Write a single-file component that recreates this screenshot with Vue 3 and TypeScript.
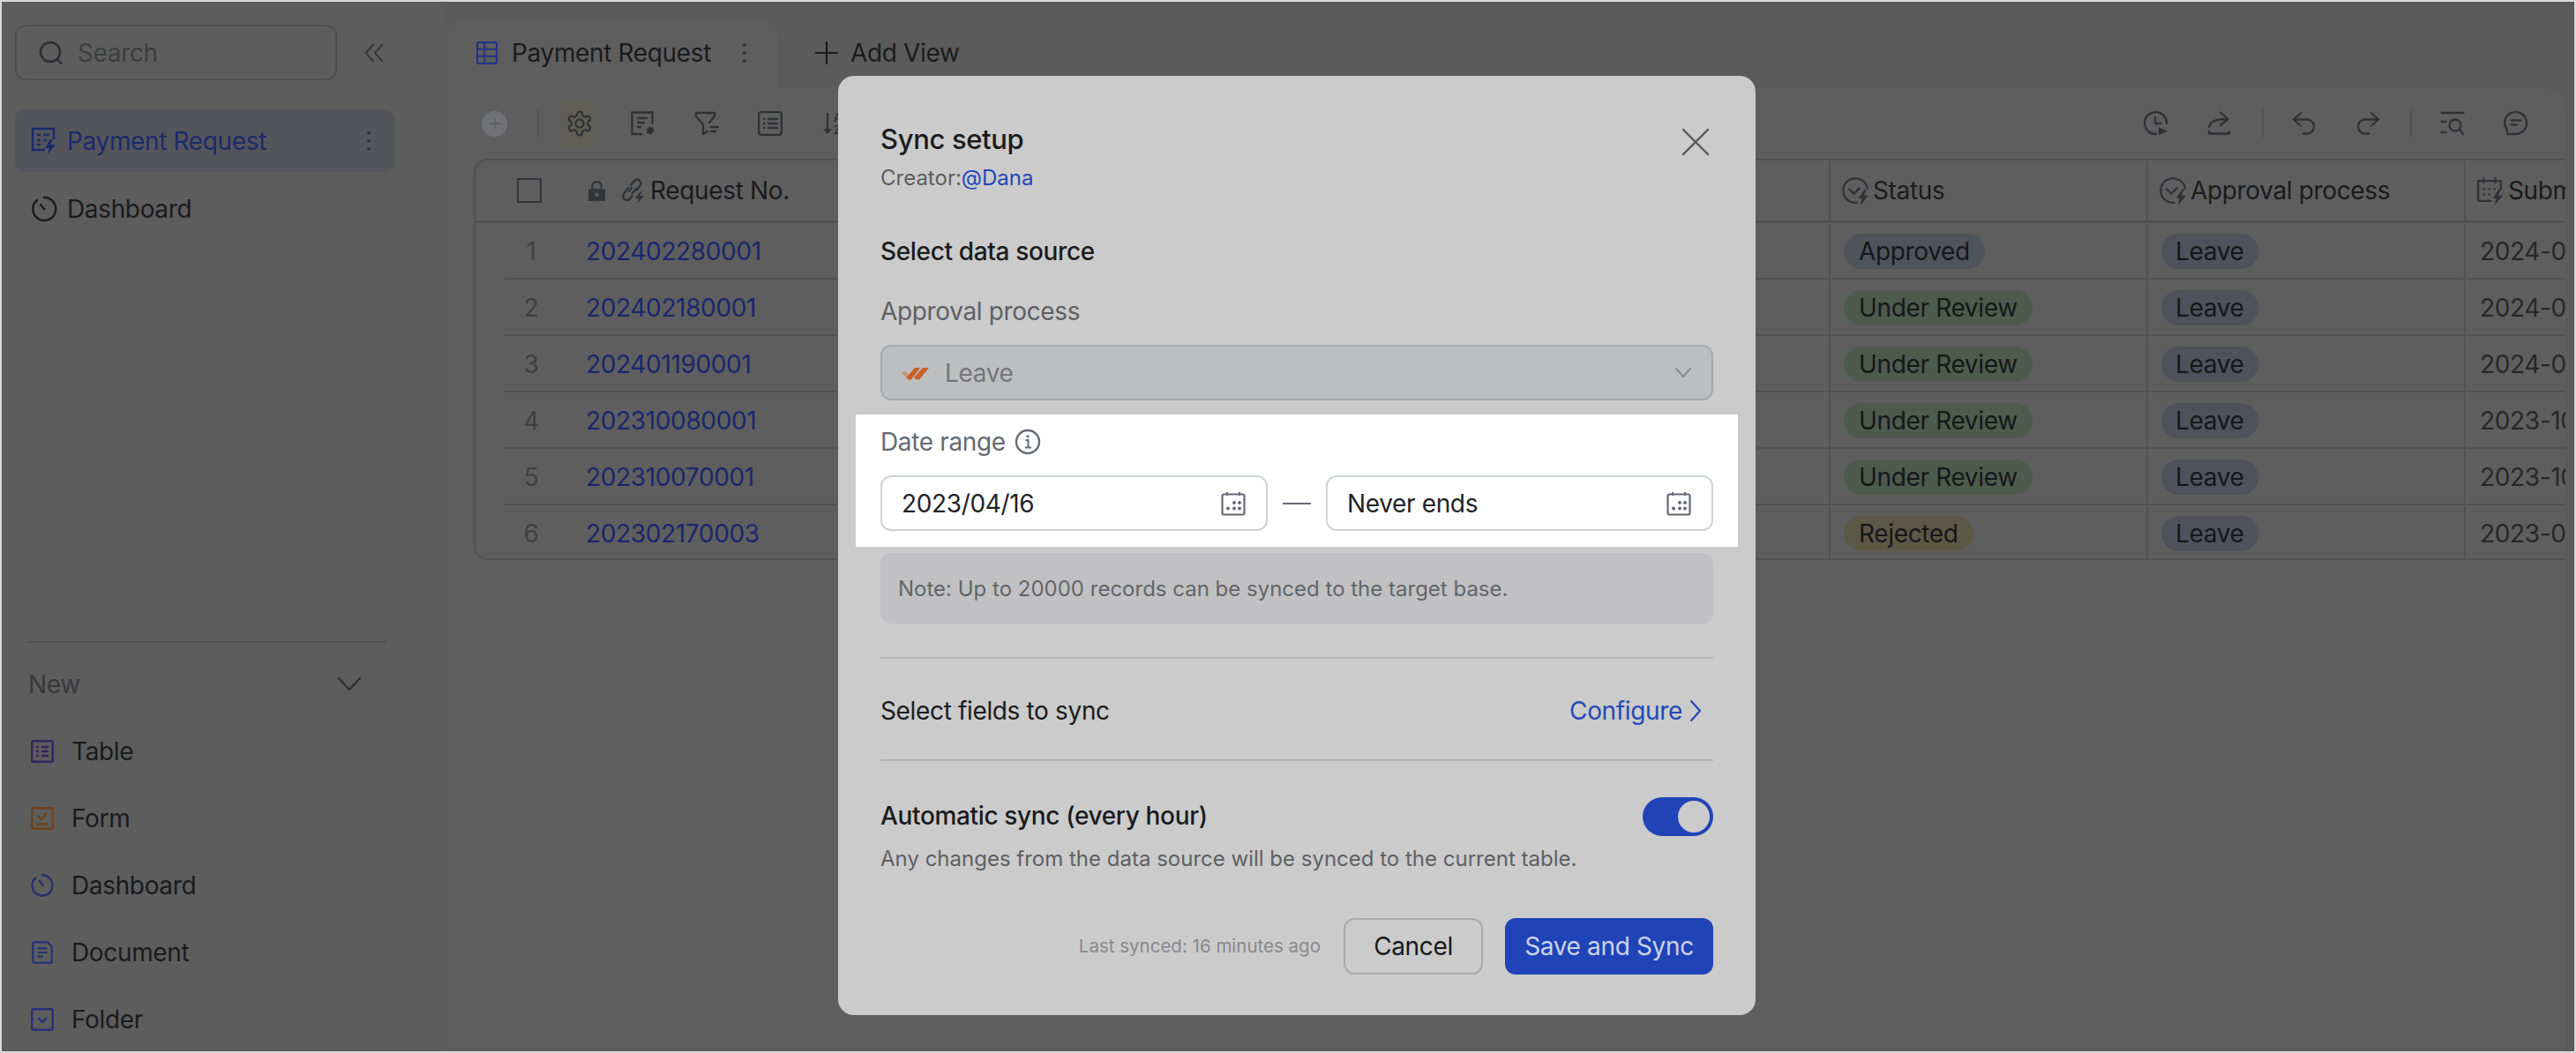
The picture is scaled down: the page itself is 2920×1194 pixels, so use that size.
<template>
  <div class="page">
    <aside class="sidebar">
      <div class="search-row">
        <div class="search">
          <svg class="ic28" viewBox="0 0 28 28" fill="none" stroke="currentColor" stroke-width="2.4" stroke-linecap="round">
            <circle cx="13" cy="13" r="11" />
            <path d="M21 21.5l4.5 4.5" />
          </svg>
          <span>Search</span>
        </div>
        <svg class="collapse" viewBox="0 0 28 28" fill="none" stroke="currentColor" stroke-width="2.2" stroke-linecap="round" stroke-linejoin="round">
          <path d="M13 4L4 14l9 10M24 4l-9 10 9 10" />
        </svg>
      </div>
      <div class="nav-item active">
        <svg class="ic30" viewBox="0 0 30 32" fill="none" stroke="currentColor" stroke-width="2.4">
          <path d="M16 26H2V2h24v12" />
          <path d="M7 9h4M14 9h7M7 15h4M14 15h4M7 20h4" />
          <path d="M22 14l-6 10h5l-2 7 9-11h-6l3-6z" fill="currentColor" stroke="none" />
        </svg>
        <span>Payment Request</span>
        <i class="kebab"></i>
      </div>
      <div class="nav-item">
        <svg class="ic30" viewBox="0 0 30 32" fill="none" stroke="currentColor" stroke-width="2.4" stroke-linecap="round">
          <path d="M15 3a13 13 0 1 1-8 3" />
          <path d="M11 11l4 5" />
        </svg>
        <span>Dashboard</span>
      </div>
      <div class="side-bottom">
        <div class="new-head">
          <span>New</span>
          <svg class="new-chev" viewBox="0 0 30 20" fill="none" stroke="currentColor" stroke-width="2.2" stroke-linecap="round" stroke-linejoin="round">
            <path d="M3 3l12 13L27 3" />
          </svg>
        </div>
        <div class="new-item">
          <svg class="ic26" viewBox="0 0 26 26" fill="none" stroke="#33245f" stroke-width="2.4">
            <rect x="1.2" y="1.2" width="23.6" height="23.6" rx="1.5" />
            <path d="M6 8h3M12 8h8M6 13h3M12 13h8M6 18h3M12 18h8" />
          </svg>
          <span>Table</span>
        </div>
        <div class="new-item">
          <svg class="ic26" viewBox="0 0 26 26" fill="none" stroke="#744219" stroke-width="2.4">
            <rect x="1.2" y="1.2" width="23.6" height="23.6" rx="1.5" />
            <path d="M8 10l4 4 6-7M6.5 19.5h13" />
          </svg>
          <span>Form</span>
        </div>
        <div class="new-item">
          <svg class="ic26" viewBox="0 0 26 26" fill="none" stroke="#2a2f70" stroke-width="2.4" stroke-linecap="round">
            <path d="M13 1.5a11.5 11.5 0 1 1-8 3.2" />
            <path d="M10 8l3.5 5" />
          </svg>
          <span>Dashboard</span>
        </div>
        <div class="new-item">
          <svg class="ic26" viewBox="0 0 26 28" fill="none" stroke="#243575" stroke-width="2.4">
            <path d="M3 1.5h16l5.5 5V26.5H3.5a2 2 0 0 1-2-2V3a2 2 0 0 1 1.5-1.5z" />
            <path d="M7 9h12M7 14h12M7 19h7" />
          </svg>
          <span>Document</span>
        </div>
        <div class="new-item">
          <svg class="ic26" viewBox="0 0 26 26" fill="none" stroke="#27327a" stroke-width="2.4">
            <rect x="1.2" y="1.2" width="23.6" height="23.6" rx="1.5" />
            <path d="M8 11l5 5 5-5" />
          </svg>
          <span>Folder</span>
        </div>
      </div>
    </aside>

    <main class="main">
      <div class="tabs">
        <div class="tab">
          <svg class="ic26" viewBox="0 0 26 28" fill="none" stroke="#22338a" stroke-width="2.2">
            <rect x="1.2" y="1.2" width="23.6" height="25.6" rx="2" />
            <path d="M1.2 9.5h23.6M1.2 18h23.6M10 1.2v25.6" />
          </svg>
          <span>Payment Request</span>
          <i class="kebab"></i>
        </div>
        <div class="add-view">
          <svg class="ic26" viewBox="0 0 26 26" fill="none" stroke="currentColor" stroke-width="2.2" stroke-linecap="round">
            <path d="M13 1v24M1 13h24" />
          </svg>
          <span>Add View</span>
        </div>
      </div>

      <section class="panel">
        <div class="toolbar">
          <div class="tool-group left">
            <span class="add-circle">
              <svg viewBox="0 0 14 14" fill="none" stroke="#5e6065" stroke-width="1.8" stroke-linecap="round"><path d="M7 2v10M2 7h10" /></svg>
            </span>
            <i class="sep"></i>
            <span class="tool hot">
              <svg class="gear" viewBox="0 0 24 24" fill="none" stroke="currentColor" stroke-width="1.7" stroke-linejoin="round">
                <path d="M12.22 2h-.44a2 2 0 0 0-2 2v.18a2 2 0 0 1-1 1.73l-.43.25a2 2 0 0 1-2 0l-.15-.08a2 2 0 0 0-2.73.73l-.22.38a2 2 0 0 0 .73 2.73l.15.1a2 2 0 0 1 1 1.72v.51a2 2 0 0 1-1 1.74l-.15.09a2 2 0 0 0-.73 2.73l.22.38a2 2 0 0 0 2.73.73l.15-.08a2 2 0 0 1 2 0l.43.25a2 2 0 0 1 1 1.73V20a2 2 0 0 0 2 2h.44a2 2 0 0 0 2-2v-.18a2 2 0 0 1 1-1.73l.43-.25a2 2 0 0 1 2 0l.15.08a2 2 0 0 0 2.73-.73l.22-.39a2 2 0 0 0-.73-2.73l-.15-.08a2 2 0 0 1-1-1.74v-.5a2 2 0 0 1 1-1.74l.15-.09a2 2 0 0 0 .73-2.73l-.22-.38a2 2 0 0 0-2.73-.73l-.15.08a2 2 0 0 1-2 0l-.43-.25a2 2 0 0 1-1-1.73V4a2 2 0 0 0-2-2z" />
                <circle cx="12" cy="12" r="3.4" />
              </svg>
            </span>
            <span class="tool">
              <svg class="ic28" viewBox="0 0 28 28" fill="none" stroke="currentColor" stroke-width="2.3">
                <path d="M13 26H1.5V1.5h23V15" />
                <path d="M7 8h12M7 13h9M7 18h5" />
                <circle cx="22" cy="22" r="3" fill="currentColor" stroke-width="3" stroke-dasharray="2 1" />
              </svg>
            </span>
            <span class="tool">
              <svg class="ic28" viewBox="0 0 28 28" fill="none" stroke="currentColor" stroke-width="2.3" stroke-linejoin="round" stroke-linecap="round">
                <path d="M17 13l6-7V2H2v4l8 9v11l5-3" />
                <path d="M18.5 18H27M18.5 23H24" />
              </svg>
            </span>
            <span class="tool">
              <svg class="ic28" viewBox="0 0 28 28" fill="none" stroke="currentColor" stroke-width="2.3" stroke-linecap="round">
                <rect x="1.2" y="1.2" width="25.6" height="25.6" rx="2.5" />
                <path d="M7 9h.5M12 9h10M7 14h.5M12 14h10M7 19h.5M12 19h10" />
              </svg>
            </span>
            <span class="tool">
              <svg class="ic28" viewBox="0 0 28 28" fill="none" stroke="currentColor" stroke-width="2.2">
                <path d="M7 2v23" />
                <path d="M2 20l5 6 5-6z" fill="currentColor" stroke="none" />
                <text x="14" y="12" class="sort-text">A</text>
                <text x="14" y="26" class="sort-text">Z</text>
              </svg>
            </span>
          </div>
          <div class="tool-group">
            <span class="tool">
              <svg class="ic28" viewBox="0 0 28 28" fill="none" stroke="currentColor" stroke-width="2.3" stroke-linecap="round" stroke-linejoin="round">
                <path d="M14 26A12.5 12.5 0 1 1 26 14" />
                <path d="M13 7v7h6" />
                <path d="M17 18l10 5-10 4z" fill="currentColor" stroke="none" />
              </svg>
            </span>
            <span class="tool">
              <svg class="ic28" viewBox="0 0 28 28" fill="none" stroke="currentColor" stroke-width="2.3" stroke-linecap="round" stroke-linejoin="round">
                <path d="M2 18c1-6 7-9 20-9" />
                <path d="M15 1.5L23.5 9 15 16" />
                <path d="M2 23v2.5h23V23" />
              </svg>
            </span>
            <i class="sep"></i>
            <span class="tool">
              <svg class="ic28" viewBox="0 0 28 28" fill="none" stroke="currentColor" stroke-width="2.3" stroke-linecap="round" stroke-linejoin="round">
                <path d="M10 2L2 9.5l8 7" />
                <path d="M3 9.5h14a8 8 0 0 1 0 16h-4" />
              </svg>
            </span>
            <span class="tool">
              <svg class="ic28" viewBox="0 0 28 28" fill="none" stroke="currentColor" stroke-width="2.3" stroke-linecap="round" stroke-linejoin="round">
                <path d="M18 2l8 7.5-8 7" />
                <path d="M25 9.5H11a8 8 0 0 0 0 16h4" />
              </svg>
            </span>
            <i class="sep"></i>
            <span class="tool">
              <svg class="ic28" viewBox="0 0 28 28" fill="none" stroke="currentColor" stroke-width="2.3" stroke-linecap="round">
                <path d="M1.5 2h25M1.5 12h5M1.5 24h5" />
                <circle cx="17" cy="16" r="6.5" />
                <path d="M22 21l4 5" />
              </svg>
            </span>
            <span class="tool">
              <svg class="ic28" viewBox="0 0 28 28" fill="none" stroke="currentColor" stroke-width="2.3" stroke-linecap="round" stroke-linejoin="round">
                <path d="M4 26h10A12.5 12.5 0 1 0 4 21.5z" />
                <path d="M9 10.5h10M9 15.5h6" />
              </svg>
            </span>
          </div>
        </div>

        <div class="table">
          <div class="grid head">
            <div class="cell num"><i class="check"></i></div>
            <div class="cell first">
              <svg class="lock" viewBox="0 0 20 24" fill="currentColor">
                <path d="M0 10.5a1 1 0 0 1 1-1h18a1 1 0 0 1 1 1V23a1 1 0 0 1-1 1H1a1 1 0 0 1-1-1z" />
                <path d="M4.5 10V6.5a5.5 5.5 0 0 1 11 0V10" fill="none" stroke="currentColor" stroke-width="2.4" />
                <circle cx="10" cy="16.5" r="2.4" fill="#5e5e5e" />
              </svg>
              <svg class="head-ic" viewBox="0 0 30 30" fill="none" stroke="currentColor" stroke-width="2.2" stroke-linecap="round">
                <path d="M12 9l5-6a4.5 4.5 0 0 1 6 6l-4 5M13 12l-3 4M9 12l-5 7a4.5 4.5 0 0 0 6.5 6l3-3.5M14 18l4-5" />
                <path d="M23 16l-6 8h4l-2 6 8-9h-5l3-5z" fill="currentColor" stroke="none" />
              </svg>
              <span>Request No.</span>
            </div>
            <div class="cell col">
              <svg class="head-ic big" viewBox="0 0 32 32" fill="none" stroke="currentColor" stroke-width="2.2" stroke-linecap="round" stroke-linejoin="round">
                <path d="M17 29A13.5 13.5 0 1 1 29 13" />
                <path d="M9 14l5 5 6-6" />
                <path d="M26 14l-7 10h4l-2 8 9-11h-5l3-7z" fill="currentColor" stroke="none" />
              </svg>
              <span>Status</span>
            </div>
            <div class="cell col">
              <svg class="head-ic big" viewBox="0 0 32 32" fill="none" stroke="currentColor" stroke-width="2.2" stroke-linecap="round" stroke-linejoin="round">
                <path d="M17 29A13.5 13.5 0 1 1 29 13" />
                <path d="M9 14l5 5 6-6" />
                <path d="M26 14l-7 10h4l-2 8 9-11h-5l3-7z" fill="currentColor" stroke="none" />
              </svg>
              <span>Approval process</span>
            </div>
            <div class="cell col clip">
              <svg class="head-ic big" viewBox="0 0 32 32" fill="none" stroke="currentColor" stroke-width="2.2" stroke-linecap="round" stroke-linejoin="round">
                <path d="M16 27H2V5h25v9M8 2v5M21 2v5" />
                <path d="M8 14h.5M14 14h.5M20 14h.5M8 20h.5M14 20h.5" />
                <path d="M25 14l-7 10h4l-2 8 9-11h-5l3-7z" fill="currentColor" stroke="none" />
              </svg>
              <span>Submitted</span>
            </div>
          </div>
          <div v-for="(row, i) in rows" :key="row.no" class="grid row" :class="{ last: i === rows.length - 1 }">
            <div class="cell num">{{ i + 1 }}</div>
            <div class="cell first link">{{ row.no }}</div>
            <div class="cell col"><span class="pill" :class="statusClass[row.status]">{{ row.status }}</span></div>
            <div class="cell col"><span class="pill leave">Leave</span></div>
            <div class="cell col clip date">{{ row.date }}</div>
          </div>
        </div>
      </section>
    </main>

    <div class="modal">
      <div class="modal-head">
        <div>
          <h2>Sync setup</h2>
          <p class="creator">Creator:<a>@Dana</a></p>
        </div>
        <svg class="close" viewBox="0 0 32 32" fill="none" stroke="#55575b" stroke-width="2.4" stroke-linecap="round">
          <path d="M2 2l28 28M30 2L2 30" />
        </svg>
      </div>

      <h3>Select data source</h3>
      <div class="label">Approval process</div>
      <div class="select">
        <svg class="leave-logo" viewBox="0 0 32 16">
          <path d="M0 8l4-2.5 3.5 3L5 13z" fill="#c99a72" />
          <path d="M5 13L15 2h6L11 15.5H8z" fill="#c9632b" />
          <path d="M14 13L24 2h7L20 15.5h-3z" fill="#c9632b" />
        </svg>
        <span>Leave</span>
        <svg class="chev" viewBox="0 0 20 14" fill="none" stroke="#8d8f93" stroke-width="2.2" stroke-linecap="round" stroke-linejoin="round">
          <path d="M2 2l8 9 8-9" />
        </svg>
      </div>

      <div class="highlight">
        <div class="label range">
          Date range
          <svg class="info" viewBox="0 0 30 30" fill="none" stroke="#646a73" stroke-width="2.4">
            <circle cx="15" cy="15" r="13" />
            <path d="M12.5 13H15.5V21M12 21.5h7" stroke-width="2" />
            <circle cx="15" cy="8.8" r="1.6" fill="#646a73" stroke="none" />
          </svg>
        </div>
        <div class="dates">
          <div class="date-input">
            <span>2023/04/16</span>
            <svg class="cal" viewBox="0 0 28 28" fill="none" stroke="#646a73" stroke-width="2.2">
              <rect x="1.5" y="3.5" width="25" height="23" rx="2" />
              <path d="M7 1v4M21 1v4" />
              <g fill="#646a73" stroke="none">
                <circle cx="15" cy="13" r="2" /><circle cx="21" cy="13" r="2" />
                <circle cx="8" cy="19.5" r="2" /><circle cx="15" cy="19.5" r="2" /><circle cx="21" cy="19.5" r="2" />
              </g>
            </svg>
          </div>
          <i class="dash"></i>
          <div class="date-input">
            <span>Never ends</span>
            <svg class="cal" viewBox="0 0 28 28" fill="none" stroke="#646a73" stroke-width="2.2">
              <rect x="1.5" y="3.5" width="25" height="23" rx="2" />
              <path d="M7 1v4M21 1v4" />
              <g fill="#646a73" stroke="none">
                <circle cx="15" cy="13" r="2" /><circle cx="21" cy="13" r="2" />
                <circle cx="8" cy="19.5" r="2" /><circle cx="15" cy="19.5" r="2" /><circle cx="21" cy="19.5" r="2" />
              </g>
            </svg>
          </div>
        </div>
      </div>

      <div class="note">Note: Up to 20000 records can be synced to the target base.</div>

      <div class="fields-row">
        <span>Select fields to sync</span>
        <a class="configure">
          Configure
          <svg viewBox="0 0 14 26" fill="none" stroke="#2448b8" stroke-width="2.2" stroke-linecap="round" stroke-linejoin="round">
            <path d="M2 2l10 11L2 24" />
          </svg>
        </a>
      </div>

      <div class="auto-row">
        <span class="auto-title">Automatic sync (every hour)</span>
        <i class="toggle"><b></b></i>
      </div>
      <p class="auto-desc">Any changes from the data source will be synced to the current table.</p>

      <div class="modal-foot">
        <span class="last-synced">Last synced: 16 minutes ago</span>
        <button class="btn cancel">Cancel</button>
        <button class="btn save">Save and Sync</button>
      </div>
    </div>
  </div>
</template>

<script setup lang="ts">
type Status = "Approved" | "Under Review" | "Rejected";

const statusClass: Record<Status, string> = {
  Approved: "approved",
  "Under Review": "review",
  Rejected: "rejected",
};

const rows: { no: string; status: Status; date: string }[] = [
  { no: "202402280001", status: "Approved", date: "2024-02-28" },
  { no: "202402180001", status: "Under Review", date: "2024-02-18" },
  { no: "202401190001", status: "Under Review", date: "2024-01-19" },
  { no: "202310080001", status: "Under Review", date: "2023-10-08" },
  { no: "202310070001", status: "Under Review", date: "2023-10-07" },
  { no: "202302170003", status: "Rejected", date: "2023-02-17" },
];
</script>

<style>
html,
body {
  margin: 0;
  background: #5c5c5c;
}
</style>

<style scoped>
.page {
  position: relative;
  display: flex;
  box-sizing: border-box;
  width: 2920px;
  height: 1194px;
  overflow: hidden;
  border: 2px solid #d9d9d9;
  background: #5b5b5b;
  color: #1a1b1d;
  font-family: Inter, "Liberation Sans", sans-serif;
  font-size: 28px;
  line-height: 40px;
  letter-spacing: -0.35px;
}
svg {
  display: block;
  flex: none;
}
i {
  display: block;
  font-style: normal;
}
.ic26 {
  width: 26px;
  height: 26px;
}
.ic28 {
  width: 28px;
  height: 28px;
}
.ic30 {
  width: 30px;
  height: 32px;
}

/* sidebar */
.sidebar {
  flex: none;
  box-sizing: border-box;
  width: 503px;
  padding: 26px 54px 0 15px;
  background: #5d5d5d;
}
.search-row {
  display: flex;
  align-items: center;
  gap: 29px;
  width: 434px;
}
.search {
  display: flex;
  align-items: center;
  gap: 16px;
  box-sizing: border-box;
  width: 365px;
  height: 63px;
  padding-left: 25px;
  border: 2px solid #505050;
  border-radius: 12px;
  color: #3c3d3f;
}
.search svg {
  color: #2c2d30;
}
.collapse {
  width: 26px;
  height: 26px;
  color: #36373a;
}
.nav-item {
  display: flex;
  align-items: center;
  gap: 11px;
  box-sizing: border-box;
  width: 431px;
  height: 71px;
  padding: 0 18px;
}
.nav-item.active {
  margin-top: 33px;
  background: #53555a;
  border-radius: 12px;
  color: #1c2a6c;
}
.nav-item + .nav-item {
  margin-top: 6px;
}
.kebab {
  width: 4px;
  height: 4px;
  border-radius: 50%;
  background: #36373a;
  box-shadow: 0 -9px 0 #36373a, 0 9px 0 #36373a;
}
.nav-item .kebab {
  margin-left: auto;
  margin-right: 10px;
}
.side-bottom {
  box-sizing: border-box;
  width: 421px;
  margin-top: 455px;
  padding-left: 15px;
}
.new-head {
  display: flex;
  align-items: center;
  justify-content: space-between;
  box-sizing: border-box;
  height: 87px;
  padding: 8px 27px 0 0;
  border-top: 2px solid #505050;
  color: #38393b;
}
.new-chev {
  width: 30px;
  height: 20px;
  color: #2e2f32;
}
.new-item {
  display: flex;
  align-items: center;
  gap: 20px;
  height: 76px;
  margin-left: 3px;
}

/* main */
.main {
  display: flex;
  flex-direction: column;
  flex: 1;
  min-width: 0;
  padding-right: 10px;
}
.tabs {
  display: flex;
  align-items: flex-end;
  height: 98px;
  flex: none;
}
.tab {
  display: flex;
  align-items: center;
  box-sizing: border-box;
  width: 377px;
  height: 80px;
  padding: 0 34px;
  gap: 15px;
  border-radius: 24px 24px 0 0;
  background: #5e5e5e;
}
.tab .kebab {
  margin-left: auto;
  margin-right: 2px;
}
.add-view {
  display: flex;
  align-items: center;
  gap: 14px;
  height: 80px;
  margin-left: 42px;
}
.panel {
  flex: 1;
  min-height: 0;
  border-radius: 0 24px 0 0;
  background: #5e5e5e;
}
.toolbar {
  display: flex;
  justify-content: space-between;
  align-items: center;
  height: 80px;
  padding: 0 32px 0 41px;
}
.tool-group {
  display: flex;
  align-items: center;
  gap: 24px;
}
.tool-group .sep {
  margin-right: -2px;
}
.tool-group.left .sep {
  margin-left: 10px;
}
.add-circle {
  display: flex;
  align-items: center;
  justify-content: center;
  width: 29px;
  height: 29px;
  border-radius: 50%;
  background: #717276;
}
.add-circle svg {
  width: 14px;
  height: 14px;
}
.sep {
  width: 2px;
  height: 32px;
  background: #535353;
}
.tool {
  display: flex;
  align-items: center;
  justify-content: center;
  width: 48px;
  height: 52px;
  border-radius: 10px;
  color: #303135;
}
.tool.hot {
  background: #5f5e57;
}
.gear {
  width: 32px;
  height: 32px;
}
.sort-text {
  font-size: 13px;
  font-weight: 600;
  fill: currentColor;
  stroke: none;
}

/* table */
.table {
  height: 455px;
  margin-left: 32px;
  overflow: hidden;
  box-sizing: border-box;
  border: 2px solid #525252;
  border-right: 0;
  border-radius: 16px 0 0 16px;
}
.grid {
  display: grid;
  grid-template-columns: 60px 1441px 360px 360px 1fr;
}
.head {
  height: 71px;
  padding-left: 33px;
  border-bottom: 3px solid #525252;
  box-sizing: border-box;
}
.row {
  height: 64px;
  margin-left: 33px;
  box-sizing: border-box;
  border-bottom: 2px solid #525252;
  padding-top: 1px;
}
.row.last {
  border-bottom: 0;
  height: 62px;
}
.cell {
  display: flex;
  align-items: center;
  min-width: 0;
}
.num {
  justify-content: center;
  color: #3e3f43;
}
.check {
  width: 24px;
  height: 24px;
  margin-right: 4px;
  border: 2px solid #333438;
}
.first {
  padding-left: 32px;
}
.head .first {
  padding-left: 35px;
}
.link {
  color: #1a276c;
}
.lock {
  width: 19px;
  height: 23px;
  color: #343539;
  margin-right: 17px;
}
.head-ic {
  width: 30px;
  height: 30px;
  color: #303135;
  margin-right: 4px;
}
.head-ic.big {
  width: 33px;
  height: 33px;
  margin-right: 3px;
}
.col {
  border-left: 2px solid #525252;
  padding-left: 15px;
  overflow: hidden;
}
.col.clip {
  white-space: nowrap;
}
.head .col {
  padding-left: 12px;
}
.pill {
  padding: 0 17px;
  height: 40px;
  border-radius: 20px;
  color: #15171a;
  line-height: 40px;
  white-space: nowrap;
}
.pill.leave {
  padding: 0 16px;
}
.approved {
  background: #4f535b;
}
.review {
  background: #4d5b4c;
}
.rejected {
  background: #5c5846;
}
.leave {
  background: #4f525c;
}
.date {
  color: #26272a;
  padding-left: 16px;
}

/* modal */
.modal {
  position: absolute;
  left: 948px;
  top: 84px;
  box-sizing: border-box;
  width: 1040px;
  height: 1065px;
  padding: 52px 48px 0;
  border-radius: 18px;
  background: #cbcbcb;
  color: #1a1b1d;
}
.modal-head {
  display: flex;
  justify-content: space-between;
}
h2 {
  margin: 0;
  font-size: 31px;
  font-weight: 500;
  line-height: 40px;
}
.creator {
  margin: 8px 0 0;
  font-size: 24px;
  line-height: 32px;
  letter-spacing: 0;
  color: #5b5d61;
}
.creator a {
  color: #2446b8;
}
.close {
  width: 32px;
  height: 32px;
  margin: 7px 4px 0 0;
}
h3 {
  margin: 47px 0 0;
  font-size: 28px;
  font-weight: 500;
  line-height: 40px;
}
.label {
  margin-top: 28px;
  color: #5e6064;
}
.select {
  display: flex;
  align-items: center;
  box-sizing: border-box;
  height: 63px;
  margin-top: 18px;
  padding: 0 22px;
  border: 2px solid #a9aaac;
  border-radius: 12px;
  background: #bdbec0;
  color: #72757b;
}
.leave-logo {
  width: 32px;
  height: 16px;
  margin-right: 17px;
}
.chev {
  width: 20px;
  height: 14px;
  margin-left: auto;
}
.highlight {
  margin: 16px -28px 0;
  padding: 11px 28px 18px;
  background: #fff;
}
.range {
  display: flex;
  align-items: center;
  gap: 10px;
  margin-top: 0;
  color: #646a73;
}
.info {
  width: 30px;
  height: 30px;
}
.dates {
  display: flex;
  align-items: center;
  justify-content: space-between;
  margin-top: 18px;
}
.date-input {
  display: flex;
  align-items: center;
  justify-content: space-between;
  box-sizing: border-box;
  width: 439px;
  height: 63px;
  padding: 0 23px 0 22px;
  border: 2px solid #d0d3d6;
  border-radius: 12px;
  background: #fff;
  color: #1f2329;
}
.cal {
  width: 28px;
  height: 28px;
}
.dash {
  width: 32px;
  height: 2px;
  background: #646a73;
}
.note {
  display: flex;
  align-items: center;
  box-sizing: border-box;
  height: 80px;
  margin-top: 7px;
  padding: 2px 0 0 20px;
  border-radius: 12px;
  background: #c1c1c3;
  color: #636568;
  font-size: 24px;
  letter-spacing: 0;
}
.fields-row {
  display: flex;
  align-items: center;
  justify-content: space-between;
  box-sizing: border-box;
  height: 118px;
  margin-top: 38px;
  padding: 4px 13px 0 0;
  border-top: 2px solid #b5b5b5;
  border-bottom: 2px solid #b5b5b5;
}
.configure {
  display: flex;
  align-items: center;
  gap: 8px;
  color: #2448b8;
}
.configure svg {
  width: 14px;
  height: 26px;
}
.auto-row {
  display: flex;
  align-items: center;
  justify-content: space-between;
  margin-top: 41px;
  height: 44px;
}
.auto-title {
  margin-top: -3px;
  font-weight: 500;
}
.toggle {
  position: relative;
  width: 80px;
  height: 44px;
  border-radius: 22px;
  background: #2043b8;
}
.toggle b {
  position: absolute;
  top: 4px;
  right: 4px;
  width: 36px;
  height: 36px;
  border-radius: 50%;
  background: #cbcbcb;
}
.auto-desc {
  margin: 10px 0 0;
  font-size: 24px;
  line-height: 32px;
  letter-spacing: 0;
  color: #5e6064;
}
.modal-foot {
  display: flex;
  align-items: center;
  justify-content: flex-end;
  margin-top: 51px;
}
.last-synced {
  margin-right: 26px;
  font-size: 20.5px;
  letter-spacing: 0;
  color: #88898c;
}
.btn {
  box-sizing: border-box;
  height: 64px;
  padding: 0;
  border-radius: 12px;
  font: inherit;
  letter-spacing: inherit;
}
.cancel {
  width: 158px;
  border: 2px solid #a9a9a9;
  background: transparent;
  color: #17181a;
}
.save {
  width: 236px;
  margin-left: 25px;
  border: 0;
  background: #2043b8;
  color: #ccd3ea;
}
</style>
